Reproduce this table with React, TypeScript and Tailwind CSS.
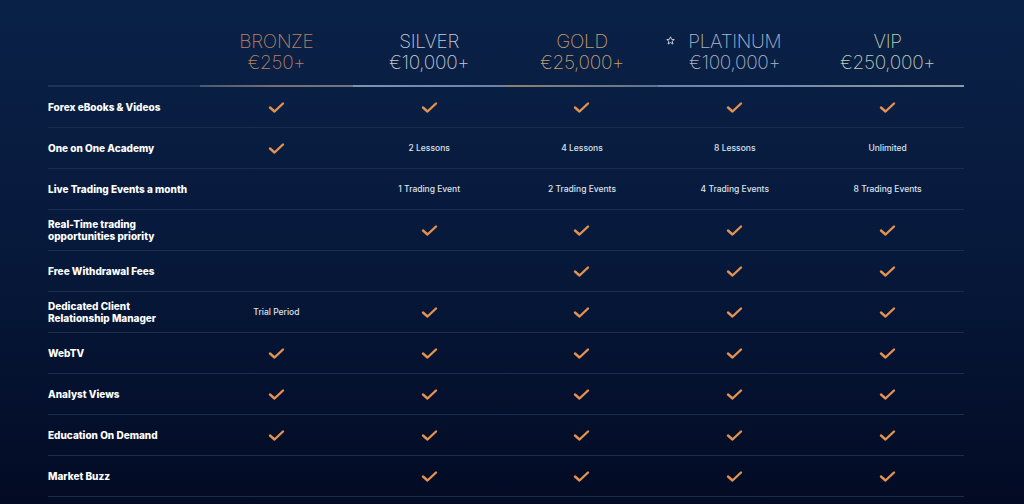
import React from "react";

const tiers = [
  { name: "BRONZE", price: "€250+", color: "text-[#b98062]", line: "bg-gradient-to-r from-[#4a5a72] via-[#7d6e6c] to-[#6f7484]" },
  { name: "SILVER", price: "€10,000+", color: "text-[#c3cad6]", line: "bg-gradient-to-r from-[#7f93b3] to-[#6e819f]" },
  { name: "GOLD", price: "€25,000+", color: "text-[#c49e6e]", line: "bg-gradient-to-r from-[#8f8168] to-[#5f7392]" },
  { name: "PLATINUM", price: "€100,000+", color: "text-[#aab6cc]", line: "bg-gradient-to-r from-[#6f84a5] to-[#7a8dab]" },
  { name: "VIP", price: "€250,000+", color: "text-[#c0ccb4]", line: "bg-gradient-to-r from-[#7d8ea3] to-[#8a99a4]" },
];

type Cell = boolean | string;

const rows: { label: string[]; cells: Cell[] }[] = [
  { label: ["Forex eBooks & Videos"], cells: [true, true, true, true, true] },
  { label: ["One on One Academy"], cells: [true, "2 Lessons", "4 Lessons", "8 Lessons", "Unlimited"] },
  { label: ["Live Trading Events a month"], cells: [false, "1 Trading Event", "2 Trading Events", "4 Trading Events", "8 Trading Events"] },
  { label: ["Real-Time trading", "opportunities priority"], cells: [false, true, true, true, true] },
  { label: ["Free Withdrawal Fees"], cells: [false, false, true, true, true] },
  { label: ["Dedicated Client", "Relationship Manager"], cells: ["Trial Period", true, true, true, true] },
  { label: ["WebTV"], cells: [true, true, true, true, true] },
  { label: ["Analyst Views"], cells: [true, true, true, true, true] },
  { label: ["Education On Demand"], cells: [true, true, true, true, true] },
  { label: ["Market Buzz"], cells: [false, true, true, true, true] },
];

function Check() {
  return (
    <svg width="17" height="13" viewBox="0 0 17 13" fill="none">
      <polyline points="2,6.5 6.5,10.5 15,2.5" stroke="#e39251" strokeWidth="2.4" strokeLinecap="round" strokeLinejoin="round" />
    </svg>
  );
}

function Star() {
  return (
    <svg width="9" height="9" viewBox="0 0 24 24" fill="none" className="absolute left-[-22px] top-[5px]">
      <polygon points="12,2 15,9 22,9.5 16.5,14 18.5,21.5 12,17.5 5.5,21.5 7.5,14 2,9.5 9,9" stroke="#c8d0de" strokeWidth="2.6" strokeLinejoin="round" />
    </svg>
  );
}

export default function App() {
  return (
    <div
      className="w-[1024px] h-[504px] overflow-hidden bg-gradient-to-b from-[#0a2147] via-[#07193b] to-[#030b24] pl-[48px]"
      style={{ fontFamily: "Inter, 'Open Sans', sans-serif" }}
    >
      <div className="w-[916px] grid grid-cols-[152px_repeat(5,1fr)]">
        {/* header */}
        <div className="flex flex-col justify-end">
          <div className="h-[2px] bg-[#1f3558]" />
        </div>
        {tiers.map((t) => (
          <div key={t.name} className="flex flex-col">
            <div className={`pt-[31px] pb-[12px] flex flex-col items-center font-extralight text-[19px] leading-[21px] tracking-[-0.3px] ${t.color}`}>
              <span className="relative block">
                {t.name === "PLATINUM" && <Star />}
                {t.name}
              </span>
              <span className="block">{t.price}</span>
            </div>
            <div className={`h-[2px] ${t.line}`} />
          </div>
        ))}
        {/* rows */}
        {rows.map((r, i) => (
          <React.Fragment key={i}>
            <div className="h-[41px] border-b border-[#1a2d4f] flex flex-col justify-center text-white font-extrabold text-[10px] leading-[12px]">
              {r.label.map((l) => (
                <span key={l}>{l}</span>
              ))}
            </div>
            {r.cells.map((c, j) => (
              <div
                key={j}
                className="h-[41px] border-b border-[#1a2d4f] flex items-center justify-center text-[#dde2ea] text-[8.5px] font-medium"
              >
                {c === true ? <Check /> : c === false ? null : <span>{c}</span>}
              </div>
            ))}
          </React.Fragment>
        ))}
      </div>
    </div>
  );
}
